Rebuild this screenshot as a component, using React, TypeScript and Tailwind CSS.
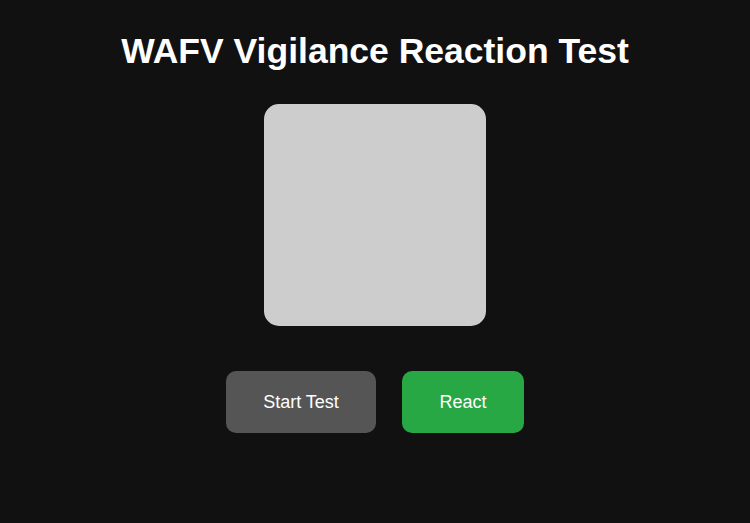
import React, { useState } from 'react';

const App: React.FC = () => {
  const [running, setRunning] = useState(false);

  return (
    <div
      className="min-h-screen w-full bg-[#111111] flex flex-col items-center pt-[31px] text-white"
      style={{ fontFamily: '"Liberation Sans", Arial, sans-serif' }}
    >
      {/* Title */}
      <h1 className="text-[35.5px] leading-[40px] font-bold">WAFV Vigilance Reaction Test</h1>

      {/* Stimulus box */}
      <div className="mt-[33px] w-[222px] h-[222px] rounded-[15px] bg-[#cdcdcd]" />

      {/* Controls */}
      <div className="mt-[45px] flex gap-[26px]">
        <button
          onClick={() => setRunning(!running)}
          className="h-[62px] w-[150px] rounded-[10px] bg-[#555555] text-white text-[18px]"
        >
          Start Test
        </button>
        <button className="h-[62px] w-[122px] rounded-[10px] bg-[#28a745] text-white text-[18px]">
          React
        </button>
      </div>
    </div>
  );
};

export default App;
